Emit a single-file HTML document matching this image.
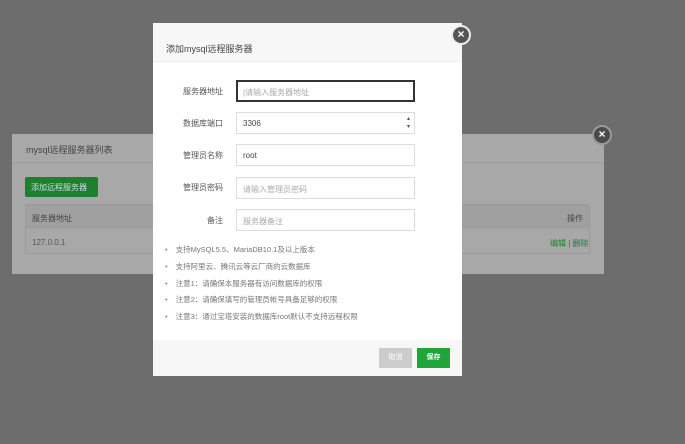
<!DOCTYPE html>
<html><head><meta charset="utf-8"><style>
*{box-sizing:border-box;margin:0;padding:0}
body{width:685px;height:444px;background:#6d6d6d;position:relative;overflow:hidden;font-family:"Liberation Sans","Noto Sans CJK SC",sans-serif;}
.abs{position:absolute}
.back{left:12px;top:134px;width:592px;height:140px;background:#a8a8a8}
.x{border-radius:50%;background:#555;border:2px solid #eee;color:#fff;text-align:center;font-weight:bold}
.modal{left:153px;top:23px;width:309px;height:353px;background:#fff}
.lbl{font-size:8px;color:#555;width:60px;text-align:right;left:10px}
.inp{left:83px;width:179px;height:22px;border:1px solid #ddd;font-size:8px;color:#aaa;padding:6px 6px;background:#fff}
.li{left:12px;font-size:7.5px;color:#777}
.li:before{content:"•";margin-right:8px;color:#888}
</style></head><body>
<div class="abs back">
  <div class="abs" style="left:14px;top:9px;font-size:9px;color:#444">mysql远程服务器列表</div>
  <div class="abs" style="left:0;top:28px;width:592px;height:1px;background:#9d9d9d"></div>
  <div class="abs" style="left:13px;top:43px;width:73px;height:20px;background:#1f7f2f;border-radius:2px;color:#cde;font-size:8px;padding:5px 6px">添加远程服务器</div>
  <div class="abs" style="left:13px;top:70px;width:565px;height:50px;border:1px solid #9a9a9a"></div>
  <div class="abs" style="left:14px;top:71px;width:563px;height:24px;background:#a0a0a0"></div>
  <div class="abs" style="left:20px;top:79px;font-size:8px;color:#444">服务器地址</div>
  <div class="abs" style="left:555px;top:79px;font-size:8px;color:#444">操作</div>
  <div class="abs" style="left:20px;top:104px;font-size:8px;color:#555">127.0.0.1</div>
  <div class="abs" style="left:538px;top:104px;font-size:8px;color:#1f7f2f">编辑 | 删除</div>
</div>
<div class="abs x" style="left:592px;top:125px;width:20px;height:20px;font-size:12px;line-height:15px;background:#4a4a4a;border-color:#999">×</div>
<div class="abs modal">
  <div class="abs" style="left:0;top:0;width:309px;height:39px;background:#f7f7f7;border-bottom:1px solid #eee"></div>
  <div class="abs" style="left:13px;top:19px;font-size:9px;color:#444">添加mysql远程服务器</div>
  <div class="abs lbl" style="top:63px">服务器地址</div>
  <div class="abs inp" style="top:57px;border:2px solid #333;color:#aaa;padding:5px 5px">|请输入服务器地址</div>
  <div class="abs lbl" style="top:95px">数据库端口</div>
  <div class="abs inp" style="top:89px;color:#444">3306<span style="position:absolute;right:4px;top:2px;font-size:6px;line-height:8px;color:#555">▴<br>▾</span></div>
  <div class="abs lbl" style="top:127px">管理员名称</div>
  <div class="abs inp" style="top:121px;color:#444">root</div>
  <div class="abs lbl" style="top:159px">管理员密码</div>
  <div class="abs inp" style="top:154px">请输入管理员密码</div>
  <div class="abs lbl" style="top:192px">备注</div>
  <div class="abs inp" style="top:186px">服务器备注</div>
  <div class="abs li" style="top:221px">支持MySQL5.5、MariaDB10.1及以上版本</div>
  <div class="abs li" style="top:238px">支持阿里云、腾讯云等云厂商的云数据库</div>
  <div class="abs li" style="top:255px">注意1：请确保本服务器有访问数据库的权限</div>
  <div class="abs li" style="top:271px">注意2：请确保填写的管理员帐号具备足够的权限</div>
  <div class="abs li" style="top:288px">注意3：通过宝塔安装的数据库root默认不支持远程权限</div>
  <div class="abs" style="left:0;top:317px;width:309px;height:36px;background:#f6f6f6"></div>
  <div class="abs" style="left:226px;top:325px;width:33px;height:20px;background:#ccc;color:#fff;font-size:7px;text-align:center;line-height:20px">取消</div>
  <div class="abs" style="left:264px;top:325px;width:33px;height:20px;background:#20a53a;color:#fff;font-size:7px;font-weight:bold;text-align:center;line-height:20px">保存</div>
</div>
<div class="abs x" style="left:451px;top:25px;width:20px;height:20px;font-size:12px;line-height:15px">×</div>
</body></html>
